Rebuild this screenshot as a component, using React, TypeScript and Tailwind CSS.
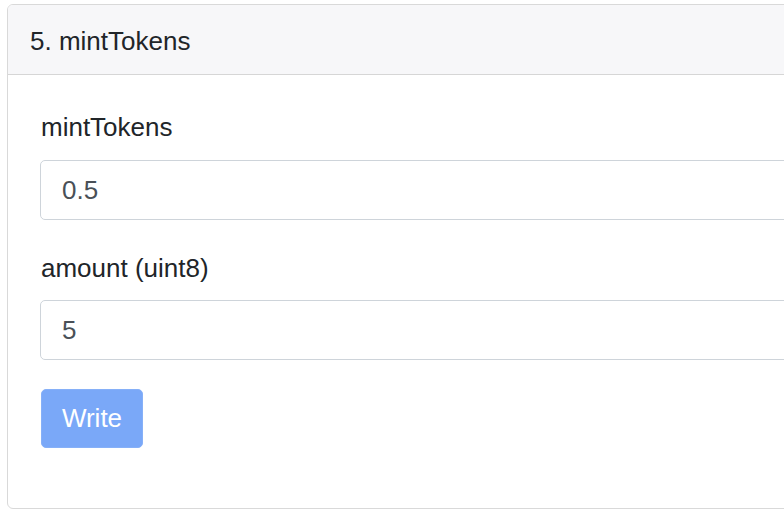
import React from "react";

export default function App() {
  return (
    <div className="w-[784px] h-[516px] overflow-hidden bg-white pl-[7px] pt-[4px]" style={{ fontFamily: '"Liberation Sans", Arial, sans-serif' }}>
      <div className="w-[820px] h-[505px] border border-[#d9d9d9] rounded-[6px] flex flex-col overflow-hidden">
        <div className="h-[70px] shrink-0 bg-[#f7f7f9] border-b border-[#d6d6d6] flex items-center pl-[22px] pt-[4px] text-[26px] text-[#212529]">
          5. mintTokens
        </div>
        <div className="pl-[32px] pt-[34px] w-[784px]">
          <div className="mb-[30px]">
            <div className="text-[26px] leading-[36px] text-[#212529] pl-[1px] mb-[15px]">mintTokens</div>
            <div className="h-[60px] border border-[#ced4da] rounded-[5px] rounded-r-none flex items-center pl-[21px] text-[26px] text-[#495057]">
              0.5
            </div>
          </div>
          <div className="mb-[29px]">
            <div className="text-[26px] leading-[36px] text-[#212529] pl-[1px] mb-[14px]">amount (uint8)</div>
            <div className="h-[60px] border border-[#ced4da] rounded-[5px] rounded-r-none flex items-center pl-[21px] text-[26px] text-[#495057]">
              5
            </div>
          </div>
          <button className="ml-[1px] w-[102px] h-[59px] rounded-[5px] bg-[#7aa8f8] border border-[#86b0f8] text-white text-[26px] flex items-center justify-center">
            Write
          </button>
        </div>
      </div>
    </div>
  );
}
